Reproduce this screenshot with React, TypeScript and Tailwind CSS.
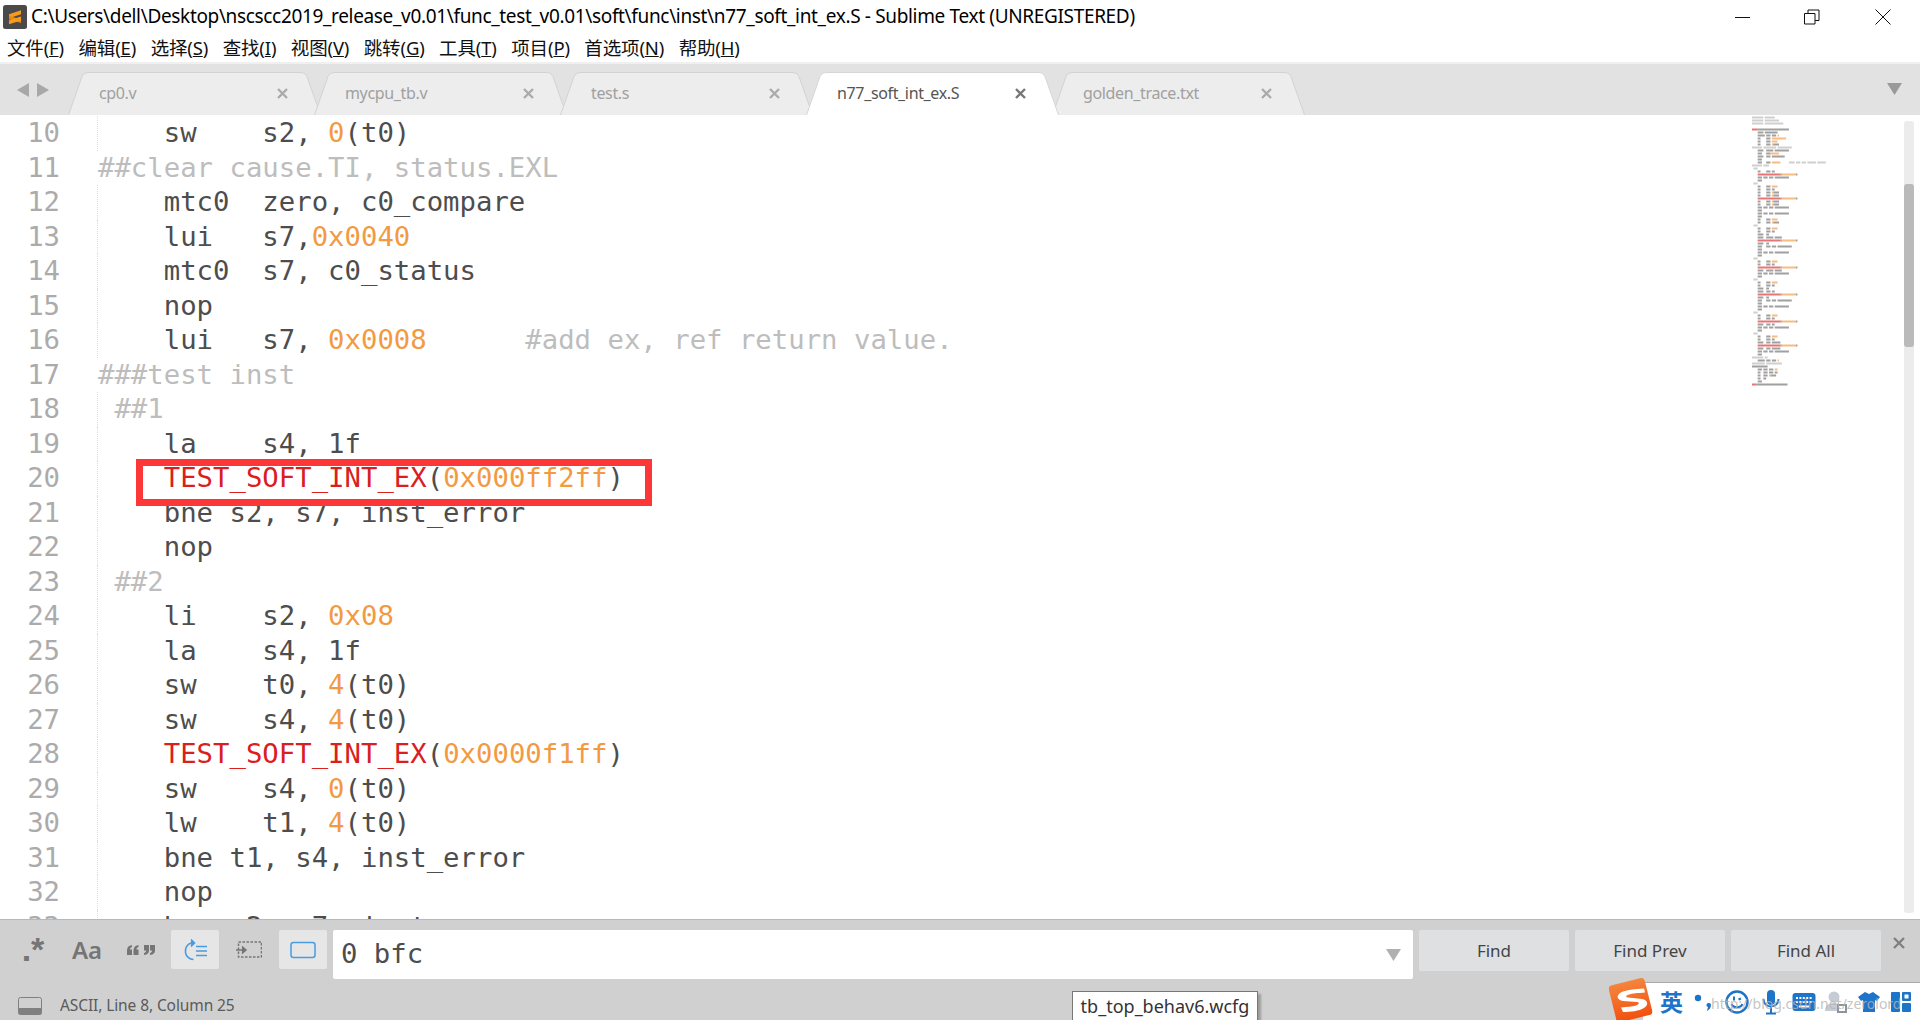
import React from "react";

const SOURCE = [
  "#include <asm.h>",
  "#include <regdef.h>",
  "#include <inst_test.h>",
  "",
  "LEAF(n77_soft_int_ex_test)",
  "    .set noreorder",
  "    addiu s0, s0, 1",
  "    li    t0, 0xbfd0f000",
  "    li    s2, 0x07",
  "    sw    s2, 0(t0)",
  "##clear cause.TI, status.EXL",
  "    mtc0  zero, c0_compare",
  "    lui   s7,0x0040",
  "    mtc0  s7, c0_status",
  "    nop",
  "    lui   s7, 0x0008      #add ex, ref return value.",
  "###test inst",
  " ##1",
  "    la    s4, 1f",
  "    TEST_SOFT_INT_EX(0x000ff2ff)",
  "    bne s2, s7, inst_error",
  "    nop",
  " ##2",
  "    li    s2, 0x08",
  "    la    s4, 1f",
  "    sw    t0, 4(t0)",
  "    sw    s4, 4(t0)",
  "    TEST_SOFT_INT_EX(0x0000f1ff)",
  "    sw    s4, 0(t0)",
  "    lw    t1, 4(t0)",
  "    bne t1, s4, inst_error",
  "    nop",
  "    bne s2, s7, inst_error",
  "    nop",
  "    li    s2, 0x08",
  "    sw    s4, 0(t0)",
  " ##3",
  "    li    s2, 0x01",
  "    la    s4, 1f",
  "    mthi  t0",
  "    mfc0  zero, c0_s0",
  "    TEST_SOFT_INT_EX(0x000000ff)",
  "    mfhi  t1",
  "    beq   t1, s0, inst_error",
  "    nop",
  "    bne s2, s7, inst_error",
  "    nop",
  " ##4",
  "    li    s2, 0x02",
  "    la    s4, 1f",
  "    TEST_SOFT_INT_EX(0x000000ff)",
  "    mfc0  zero, c0_k0",
  "    bne s2, s7, inst_error",
  "    nop",
  " ##5",
  "    li    s2, 0x03",
  "    la    s4, 1f",
  "    mtlo  t0",
  "    mtc0  t0, c0",
  "    TEST_SOFT_INT_EX(0x000000ff)",
  "    mflo  t1",
  "    beq   t1, s0, inst_error",
  "    nop",
  "    bne s2, s7, inst_error",
  "    nop",
  " ##6",
  "    li    s2, 0x04",
  "    la    s4, 1f",
  "    TEST_SOFT_INT_EX(0x000000ff)",
  "    mtlo  t0, s1",
  "    bne s2, s7, inst_error",
  "    nop",
  " ##7",
  "    li    s2, 0x05",
  "    la    s4, 1f",
  "    mtc0  s2, c0_epc",
  "    TEST_SOFT_INT_EX(0x000000ff)",
  "    mfc0  t0, c0_epc",
  "    bne s2, s7, inst_error",
  "    nop",
  "###score ++",
  "    addiu s3, s3, 1",
  "###output (s0<<24)|s3",
  "inst_error:",
  "    sll t1, s0, 24",
  "    or  t0, t1, s3",
  "    sw  t0, 0(s1)",
  "    jr  ra",
  "    nop",
  "END(n77_soft_int_ex_test)",
];

type Tok = { text: string; kind: "plain" | "comment" | "red" | "num" };

function tokenize(line: string): Tok[] {
  const hash = line.indexOf("#");
  const code = hash >= 0 ? line.slice(0, hash) : line;
  const out: Tok[] = [];
  const re = /(TEST_SOFT_INT_EX|LEAF|END)|(0x[0-9a-f]+|\b\d+\b)/g;
  let last = 0;
  let m: RegExpExecArray | null;
  while ((m = re.exec(code))) {
    if (m.index > last) out.push({ text: code.slice(last, m.index), kind: "plain" });
    out.push({ text: m[0], kind: m[1] ? "red" : "num" });
    last = m.index + m[0].length;
  }
  if (last < code.length) out.push({ text: code.slice(last), kind: "plain" });
  if (hash >= 0) out.push({ text: line.slice(hash), kind: "comment" });
  return out;
}

const TOKEN_CLASS: Record<Tok["kind"], string> = {
  plain: "text-[#4d4d4d]",
  comment: "text-[#bdbdbd]",
  red: "text-[#d9201f]",
  num: "text-[#f29a42]",
};
const MINI_FILL: Record<Tok["kind"], string> = {
  plain: "#777777",
  comment: "#bbbbbb",
  red: "#e0393a",
  num: "#f5a04a",
};

function Minimap() {
  const rects: React.ReactNode[] = [];
  SOURCE.forEach((line, i) => {
    let col = 0;
    tokenize(line).forEach((t) => {
      const re = /\S+/g;
      let m: RegExpExecArray | null;
      while ((m = re.exec(t.text))) {
        rects.push(
          <rect key={`${i}-${col}-${m.index}`} x={(col + m.index) * 1.42} y={i * 3 + 1.5} width={m[0].length * 1.42} height={2} fill={MINI_FILL[t.kind]} opacity={0.7} />
        );
      }
      col += t.text.length;
    });
  });
  return (
    <svg width="152" height="275" className="shrink-0 blur-[0.4px]" viewBox="0 0 152 275">
      {rects}
    </svg>
  );
}

const SANS = "font-['Noto_Sans','Noto_Sans_CJK_SC',sans-serif]";

function SublimeLogo() {
  return (
    <svg width="24" height="24" viewBox="0 0 24 24" className="shrink-0">
      <rect width="24" height="24" rx="2.5" fill="#4a4a4a" />
      <path d="M6 9.2 18 5.3V9.3L6 13.2Z" fill="#f79a1e" />
      <path d="M6 10.8 18 14.6V18L6 14.2Z" fill="#e58a10" />
      <path d="M6 15.2 18 11.4V15.4L6 19.2Z" fill="#f79a1e" />
    </svg>
  );
}

function TabItem({ name, active, first }: { name: string; active?: boolean; first?: boolean }) {
  return (
    <div className={`relative h-[43px] w-[253px] shrink-0 ${first ? "" : "-ml-[7px]"} ${active ? "z-10" : ""}`}>
      <svg width="253" height="43" viewBox="0 0 253 43" className="absolute inset-0">
        <path
          d="M0.5 43 L14 4.5 Q15.5 0.5 20 0.5 L233 0.5 Q237.5 0.5 239 4.5 L252.5 43"
          fill={active ? "#ffffff" : "#ededed"}
          stroke={active ? "#d6d6d6" : "#d2d2d2"}
        />
      </svg>
      <div className={`relative flex h-full items-center pb-[1px] pl-[31px] pr-[33px] text-[16px] tracking-[-0.35px] ${SANS} ${active ? "text-[#555555]" : "text-[#a0a0a0]"}`}>
        <span className="flex-1">{name}</span>
        <svg width="11" height="11" viewBox="0 0 11 11">
          <path d="M1 1 10 10M10 1 1 10" stroke={active ? "#777777" : "#ababab"} strokeWidth="2.4" />
        </svg>
      </div>
    </div>
  );
}

const MENU: [string, string][] = [
  ["文件", "F"],
  ["编辑", "E"],
  ["选择", "S"],
  ["查找", "I"],
  ["视图", "V"],
  ["跳转", "G"],
  ["工具", "T"],
  ["项目", "P"],
  ["首选项", "N"],
  ["帮助", "H"],
];

function FindButton({ label }: { label: string }) {
  return (
    <div className={`flex h-[41px] w-[150px] items-center justify-center rounded-[2px] bg-[#dfe0e2] text-[17px] text-[#444444] ${SANS}`}>{label}</div>
  );
}

function Toggle({ active, children }: { active?: boolean; children: React.ReactNode }) {
  return <div className={`flex h-[39px] w-[48px] items-center justify-center rounded-[2px] ${active ? "bg-[#e6e6e6]" : ""}`}>{children}</div>;
}

function SogouBar() {
  const blue = "#1e74c8";
  return (
    <div className="absolute bottom-0 right-0 z-20 h-[41px] w-[311px]">
      <div className="absolute bottom-0 left-[34px] right-0 flex h-[38px] items-center border-t border-[#a9a9a9] bg-white pl-[17px]">
        <span className="font-['Noto_Sans_CJK_SC',sans-serif] text-[23px] font-bold leading-none text-[#1e74c8]">英</span>
        <svg width="20" height="24" viewBox="0 0 20 24" className="ml-[11px]">
          <circle cx="4" cy="8" r="3.2" fill={blue} />
          <path d="M15 13a2 2 0 0 1 2 2c0 3-2 5-4 6l1-4a2 2 0 0 1 1-4Z" fill={blue} />
        </svg>
        <svg width="24" height="24" viewBox="0 0 24 24" className="ml-[11px]">
          <circle cx="12" cy="12" r="10.5" fill="none" stroke={blue} strokeWidth="2.4" />
          <path d="M9 6.5v4M16 8.5l-2.5 1" stroke={blue} strokeWidth="2" fill="none" />
          <path d="M6.5 14c2 4.5 9 4.5 11 0" stroke={blue} strokeWidth="2" fill="none" />
        </svg>
        <svg width="20" height="26" viewBox="0 0 20 26" className="ml-[12px]">
          <rect x="6" y="1" width="8" height="15" rx="4" fill={blue} />
          <path d="M2.5 10c0 10 15 10 15 0M10 18v6M5 24.5h10" fill="none" stroke={blue} strokeWidth="2" />
        </svg>
        <svg width="24" height="20" viewBox="0 0 24 20" className="ml-[11px]">
          <rect x="0.5" y="1" width="23" height="18" rx="3" fill={blue} />
          <path d="M4 6h16M4 10h16" stroke="#fff" strokeWidth="2" strokeDasharray="2 1.4" />
          <path d="M7 14.5h10" stroke="#fff" strokeWidth="2" />
        </svg>
        <svg width="24" height="24" viewBox="0 0 24 24" className="ml-[8px]">
          <circle cx="10" cy="7" r="5.5" fill="#c6ccd6" />
          <path d="M1 21c0-6 4-8 9-8s8 2 9 8Z" fill="#c6ccd6" />
          <rect x="13" y="14" width="10" height="9" fill="#8e949c" />
          <rect x="15" y="16" width="6" height="5" fill="#fff" />
        </svg>
        <svg width="22" height="22" viewBox="0 0 22 22" className="ml-[10px]">
          <path d="M7 1 11 3 15 1 22 6 19 10 17 9V21H5V9L3 10 0 6Z" fill={blue} />
        </svg>
        <svg width="20" height="22" viewBox="0 0 20 22" className="ml-[11px]">
          <rect x="0" y="1" width="9" height="20" rx="1" fill={blue} />
          <rect x="11" y="1" width="9" height="9" rx="1" fill={blue} />
          <rect x="11" y="12" width="9" height="9" rx="1" fill={blue} />
          <rect x="13.5" y="3.5" width="4" height="4" fill="#fff" />
        </svg>
      </div>
      <svg width="46" height="44" viewBox="0 0 46 44" className="absolute left-0 top-[-1px]">
        <defs>
          <linearGradient id="sg" x1="0" y1="0" x2="0" y2="1">
            <stop offset="0" stopColor="#f5853c" />
            <stop offset="1" stopColor="#f2500f" />
          </linearGradient>
        </defs>
        <rect x="3" y="3" width="37" height="38" rx="4" fill="url(#sg)" transform="rotate(-14 22 22)" />
        <path d="M35 10.5C26 11 17 11.5 11 15c-4 3-3 7 3 8l14 1c3 .5 2 2.5-1 3.5-4 1-9 1.500-15 2l2 4.500c8 0 16-1 21-4 5-3 4-8-2-9l-14-1.500c-3-.5-2-2 1-3 3-1 9-1.500 16-2Z" fill="#fff" />
      </svg>
      <span className={`absolute left-[102px] top-[14px] whitespace-nowrap text-[14px] text-[#b5b5b5]/80 ${SANS}`}>http://blog.csdn.net/zerolord</span>
    </div>
  );
}

function QuoteIcon() {
  return (
    <svg width="28" height="10" viewBox="0 0 28 10" fill="#757575">
      <path d="M0 10V5.500C0 2.500 1.500.5 5 0v2C3.500 2.500 3 3.200 3 4.500h2V10ZM6.500 10V5.500C6.500 2.500 8 .5 11.500 0v2C10 2.500 9.500 3.200 9.500 4.500h2V10Z" />
      <path d="M17 0h5v5.500C22 8 20.500 9.500 17 10V8c1.500-.3 2-1.200 2-2.500h-2ZM23 0h5v5.500C28 8 26.500 9.500 23 10V8c1.500-.3 2-1.200 2-2.500h-2Z" />
    </svg>
  );
}

export default function App() {
  const visible = SOURCE.slice(9, 33);
  return (
    <div className="relative flex h-[1020px] w-[1920px] flex-col overflow-hidden bg-white">
      {/* title bar */}
      <div className="flex h-[31px] items-center pl-[3px] pt-[2px]">
        <SublimeLogo />
        <span className={`ml-[4px] flex-1 whitespace-nowrap text-[19px] tracking-[-0.34px] text-black ${SANS}`}>
          {"C:\\Users\\dell\\Desktop\\nscscc2019_release_v0.01\\func_test_v0.01\\soft\\func\\inst\\n77_soft_int_ex.S - Sublime Text (UNREGISTERED)"}
        </span>
        <div className="flex items-center pr-[29px]">
          <svg width="16" height="16" viewBox="0 0 16 16"><path d="M0 8.500H15" stroke="#111" /></svg>
          <svg width="16" height="16" viewBox="0 0 16 16" className="ml-[53px]">
            <path d="M.5 4.500h10.500v10.500H.5ZM4 4.500V1h11v10.500h-4" fill="none" stroke="#111" />
          </svg>
          <svg width="16" height="16" viewBox="0 0 16 16" className="ml-[55px]"><path d="M.5.500l15 15M15.500.500l-15 15" stroke="#111" /></svg>
        </div>
      </div>

      {/* menu */}
      <div className={`flex h-[31px] items-center gap-[14.5px] pl-[7px] pt-[3px] text-[18.5px] text-[#111111] ${SANS}`}>
        {MENU.map(([label, key]) => (
          <span key={key} className="whitespace-nowrap tracking-[-0.15px]">
            {label}(<span className="underline">{key}</span>)
          </span>
        ))}
      </div>

      {/* tabs */}
      <div className="relative flex h-[53px] items-end border-t-2 border-[#f0f0f0] bg-[#e2e2e2] pl-[68px]">
        <div className="absolute left-[17px] top-[19px] flex gap-[8px]">
          <svg width="12" height="14" viewBox="0 0 12 14"><path d="M12 0V14L0 7Z" fill="#a8a8a8" /></svg>
          <svg width="12" height="14" viewBox="0 0 12 14"><path d="M0 0V14L12 7Z" fill="#a8a8a8" /></svg>
        </div>
        <TabItem name="cp0.v" first />
        <TabItem name="mycpu_tb.v" />
        <TabItem name="test.s" />
        <TabItem name="n77_soft_int_ex.S" active />
        <TabItem name="golden_trace.txt" />
        <svg width="15" height="12" viewBox="0 0 15 12" className="absolute right-[18px] top-[19px]"><path d="M0 0H15L7.500 12Z" fill="#9a9a9a" /></svg>
      </div>

      {/* editor */}
      <div className="relative flex min-h-0 flex-1">
        <div className="min-w-0 flex-1 overflow-hidden pt-[1px] font-['DejaVu_Sans_Mono',monospace] text-[27.3px] leading-[34.5px]">
          {visible.map((line, i) => (
            <div key={i} className="flex h-[34.5px]">
              <div className="w-[98px] shrink-0 pr-[38px] text-right text-[#ababab]">{i + 10}</div>
              <div className={`whitespace-pre ${line.startsWith(" ") ? "-ml-px border-l border-dotted border-[#dddddd]" : ""}`}>
                {tokenize(line).map((t, j) => (
                  <span key={j} className={TOKEN_CLASS[t.kind]}>{t.text}</span>
                ))}
              </div>
            </div>
          ))}
        </div>
        <Minimap />
        <div className="my-[6px] mr-[6px] w-[10px] shrink-0 rounded-[3px] bg-[#ececec] pt-[63px]">
          <div className="h-[163px] rounded-[3px] bg-[#bababa]" />
        </div>
        <div className="absolute left-[136px] top-[344px] h-[47px] w-[516px] border-[7px] border-[#fd3737]" />
      </div>

      {/* find panel */}
      <div className="relative h-[101px] border-t border-[#b8b8b8] bg-[#d0d0d0]">
        <div className="flex items-start pl-[9px] pt-[10px]">
          <div className="flex gap-[6px]">
            <Toggle><span className="-mt-[2px] font-['Liberation_Sans',sans-serif] text-[34px] font-bold leading-none text-[#757575]">.*</span></Toggle>
            <Toggle><span className={`text-[24px] font-semibold leading-none text-[#757575] ${SANS}`}>Aa</span></Toggle>
            <Toggle><QuoteIcon /></Toggle>
            <Toggle active>
              <svg width="26" height="24" viewBox="0 0 26 24" fill="none" stroke="#4a9be0" strokeWidth="1.600">
                <path d="M11.500 21.500A8.500 8.500 0 0 1 9 5h3" />
                <path d="M9 1.500l3.500 3.500-3.500 3.500" fill="#4a9be0" />
                <path d="M14 8.500h11M14 13h11M14 17.500h11" />
              </svg>
            </Toggle>
            <Toggle>
              <svg width="26" height="18" viewBox="0 0 26 18" fill="none" stroke="#757575">
                <rect x="2.500" y="1" width="23" height="15" strokeDasharray="2.500 1.500" strokeWidth="1.500" />
                <path d="M0 9h9M6 5.500l4 3.500-4 3.500" fill="#757575" strokeWidth="1.500" />
              </svg>
            </Toggle>
            <Toggle active>
              <svg width="26" height="18" viewBox="0 0 26 18"><rect x="1" y="1.500" width="24" height="15" rx="2.500" fill="none" stroke="#4a9be0" strokeWidth="1.500" /></svg>
            </Toggle>
          </div>
          <div className="ml-[6px] flex h-[49px] w-[1080px] items-center rounded-[2px] bg-white pl-[8px] pr-[12px] font-['DejaVu_Sans_Mono',monospace] text-[27.3px] text-[#4d4d4d]">
            <span className="flex-1 whitespace-pre">0 bfc</span>
            <svg width="15" height="12" viewBox="0 0 15 12"><path d="M0 0H15L7.500 12Z" fill="#b0b0b0" /></svg>
          </div>
          <div className="ml-[6px] flex gap-[6px]">
            <FindButton label="Find" />
            <FindButton label="Find Prev" />
            <FindButton label="Find All" />
          </div>
          <svg width="12" height="12" viewBox="0 0 12 12" className="ml-[12px] mt-[7px]"><path d="M1 1 11 11M11 1 1 11" stroke="#808080" strokeWidth="2.400" /></svg>
        </div>
        <div className={`flex items-center pl-[18px] pt-[15px] text-[15.5px] text-[#5a5a5a] ${SANS}`}>
          <svg width="24" height="18" viewBox="0 0 24 18">
            <rect x=".5" y=".5" width="23" height="17" rx="2" fill="none" stroke="#808080" />
            <rect x=".5" y="11" width="23" height="6.500" rx="1" fill="#808080" />
          </svg>
          <span className="ml-[18px] tracking-[-0.1px]">ASCII, Line 8, Column 25</span>
        </div>
        <div className={`absolute left-[1072px] top-[71px] z-10 flex h-[30px] w-[186px] items-center justify-center border border-[#777777] bg-white text-[18px] text-[#333333] shadow-[3px_3px_2px_rgba(0,0,0,0.25)] ${SANS}`}>tb_top_behav6.wcfg</div>
      </div>

      <SogouBar />
    </div>
  );
}
